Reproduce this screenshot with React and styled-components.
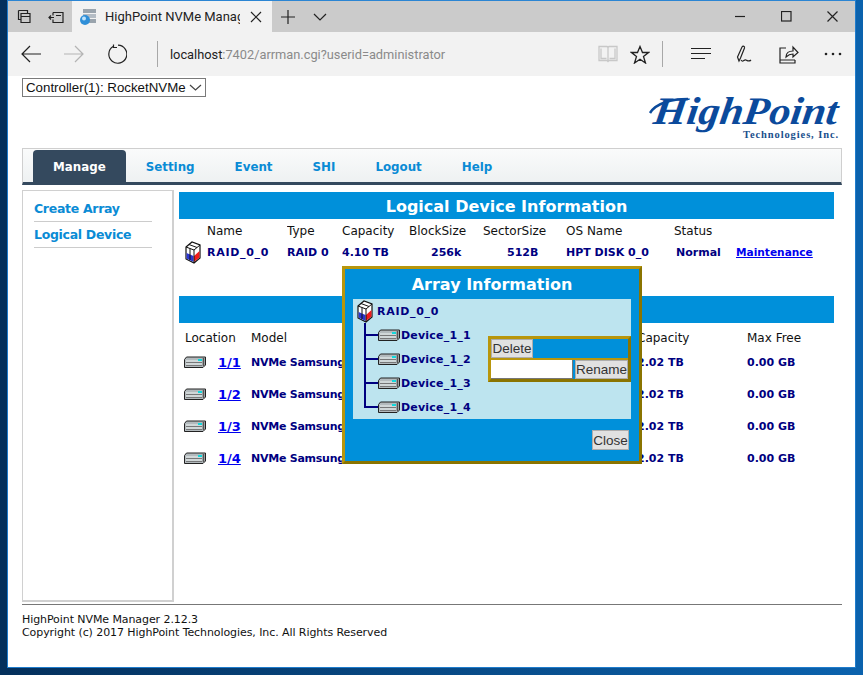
import React from "react";
import styled, { createGlobalStyle } from "styled-components";

const GlobalStyle = createGlobalStyle`
  html, body {
    margin: 0;
    padding: 0;
    height: 675px;
    overflow: hidden;
    background: linear-gradient(90deg, #04305c 0, #04305c 8px, #0b62ad 855px);
  }
  body {
    font-family: "DejaVu Sans", Verdana, sans-serif;
    font-size: 12px;
  }
`;

const BrowserWindow = styled.div`
  box-sizing: border-box;
  width: 849px;
  height: 668px;
  margin-left: 7px;
  border: 1px solid #1f7ccc;
  border-top-color: #2b85d3;
  display: flex;
  flex-direction: column;
  background: #fff;
`;

const TitleBar = styled.div`
  height: 31px;
  background: #cbcbcb;
  display: flex;
  align-items: flex-end;
  flex: none;
`;

const TitleIcon = styled.div`
  width: ${(p) => p.$w}px;
  height: 31px;
  flex: none;
  display: flex;
  align-items: center;
  justify-content: center;
`;

const BrowserTab = styled.div`
  box-sizing: border-box;
  width: 200px;
  height: 31px;
  background: #f2f2f2;
  display: flex;
  align-items: center;
  padding-left: 7px;
  flex: none;
  font-family: Roboto, sans-serif;
  font-size: 13px;
  color: #222;
`;

const TabTitle = styled.span`
  width: 135px;
  flex: none;
  margin: 0 10px 0 8px;
  overflow: hidden;
  white-space: nowrap;
`;

const Spacer = styled.div`
  flex: 1;
`;

const Toolbar = styled.div`
  height: 44px;
  background: #f2f2f2;
  display: flex;
  align-items: center;
  flex: none;
`;

const ToolIcon = styled.div`
  width: ${(p) => p.$w}px;
  height: 44px;
  flex: none;
  display: flex;
  align-items: center;
  justify-content: center;
`;

const Divider = styled.div`
  width: 1px;
  height: 26px;
  background: #a8a8a8;
  flex: none;
`;

const Address = styled.div`
  flex: 1;
  padding-left: 12px;
  font-family: Roboto, sans-serif;
  font-size: 12.8px;
  color: #8a8a8a;
  span {
    color: #222;
  }
`;

const Page = styled.div`
  position: relative;
  flex: 1;
  padding: 0 13px 0 14px;
  display: flex;
  flex-direction: column;
  color: #111;
`;

const TopRow = styled.div`
  height: 72px;
  display: flex;
  justify-content: space-between;
  flex: none;
`;

const ControllerSelect = styled.div`
  box-sizing: border-box;
  width: 184px;
  height: 19px;
  margin-top: 2px;
  border: 1px solid #7a7a7a;
  display: flex;
  align-items: center;
  justify-content: space-between;
  padding: 0 3px;
  white-space: nowrap;
  font-family: "Liberation Sans", Arial, sans-serif;
  font-size: 13.3px;
  color: #111;
`;

const Logo = styled.svg`
  width: 194px;
  height: 50px;
  margin-top: 15px;
`;

const NavBar = styled.div`
  box-sizing: border-box;
  height: 37px;
  flex: none;
  display: flex;
  padding: 1px 0 0 10px;
  border: 1px solid #cfcfcf;
  border-bottom: 3px solid #34495e;
  background: linear-gradient(#fafbfb, #eef1f2);
`;

const NavItem = styled.div`
  padding: 1px 20px 0;
  display: flex;
  align-items: center;
  font-size: 11.85px;
  font-weight: bold;
  color: ${(p) => (p.$active ? "#fff" : "#0a8bd5")};
  background: ${(p) => (p.$active ? "#34495e" : "transparent")};
  border-radius: 4px 4px 0 0;
`;

const Content = styled.div`
  display: flex;
  gap: 5px;
  margin-top: 5px;
  height: 412px;
  flex: none;
`;

const Sidebar = styled.div`
  box-sizing: border-box;
  width: 152px;
  flex: none;
  border: 1px solid #d0d0d0;
  border-width: 1px 2px 2px 1px;
  padding: 5px 20px 0 11px;
`;

const SideLink = styled.div`
  height: 25px;
  border-bottom: 1px solid #ccc;
  display: flex;
  align-items: center;
  font-size: 12.5px;
  font-weight: bold;
  letter-spacing: -0.3px;
  color: #0a8bd5;
`;

const Main = styled.div`
  width: 655px;
  padding-top: 2px;
`;

const SectionTitle = styled.div`
  height: 27px;
  background: #0090da;
  color: #fff;
  font-size: 16px;
  font-weight: bold;
  text-align: center;
  line-height: 29px;
`;

const DeviceTable = styled.table`
  border-collapse: collapse;
  table-layout: fixed;
  width: 655px;
  margin-bottom: ${(p) => p.$after}px;
  th, td {
    box-sizing: border-box;
    padding: 0;
    white-space: nowrap;
    overflow: hidden;
    text-align: left;
  }
  th {
    font-weight: normal;
    color: #111;
    height: ${(p) => p.$headH}px;
    padding-top: ${(p) => p.$headPad}px;
  }
  td {
    font-weight: bold;
    font-size: 11px;
    color: #000080;
    height: ${(p) => p.$rowH}px;
  }
`;

const IconCell = styled.td`
  && {
    padding-left: ${(p) => p.$left}px;
  }
  svg {
    display: block;
  }
`;

const IndentCell = styled.td`
  && {
    padding-left: ${(p) => p.$left}px;
  }
`;

const HeadIndent = styled.th`
  && {
    padding-left: ${(p) => p.$left}px;
  }
`;

const WideText = styled.span`
  letter-spacing: ${(p) => p.$spacing}px;
`;

const DeviceLink = styled.a`
  color: #0000ee;
  text-decoration: underline;
  font-weight: bold;
  font-size: ${(p) => p.$size}px;
`;

const Footer = styled.div`
  margin-top: 2px;
  border-top: 1px solid #777;
  padding-top: 8px;
  font-size: 11px;
  letter-spacing: -0.08px;
  line-height: 13px;
  color: #111;
`;

const Modal = styled.div`
  position: absolute;
  left: 334px;
  top: 190px;
  box-sizing: border-box;
  width: 300px;
  height: 198px;
  background: #0090da;
  border: 3px solid;
  border-color: #b8960c #8a7400 #8a7400 #b8960c;
  padding: 0 8px;
`;

const ModalTitle = styled.div`
  height: 30px;
  line-height: 32px;
  text-align: center;
  color: #fff;
  font-size: 16px;
  font-weight: bold;
`;

const TreePanel = styled.div`
  height: 120px;
  background: #bde4ef;
  display: flex;
  justify-content: space-between;
  align-items: center;
`;

const Tree = styled.div`
  padding-left: 4px;
  color: #000080;
  font-weight: bold;
  font-size: 11px;
`;

const TreeRoot = styled.div`
  height: 24px;
  display: flex;
  align-items: center;
  gap: 4px;
`;

const TreeRow = styled.div`
  height: 24px;
  display: flex;
  align-items: center;
  margin-left: 7px;
  padding-left: 14px;
  gap: 1px;
  position: relative;
  &::before {
    content: "";
    position: absolute;
    left: 0;
    top: 0;
    bottom: ${(p) => (p.$last ? "11px" : "0")};
    width: 2px;
    background: #000080;
  }
  &::after {
    content: "";
    position: absolute;
    left: 0;
    top: 11px;
    width: 14px;
    height: 2px;
    background: #000080;
  }
`;

const ActionBox = styled.div`
  box-sizing: border-box;
  width: 143px;
  height: 46px;
  border: 3px solid;
  border-color: #b8960c #8a7400 #8a7400 #b8960c;
  background: #0090da;
`;

const ActionRow = styled.div`
  display: flex;
  gap: 2px;
  height: ${(p) => p.$h}px;
  ${(p) => p.$line && "border-top: 2px solid #b8960c;"}
`;

const GreyButton = styled.button`
  box-sizing: border-box;
  margin: 0;
  padding: 0;
  height: ${(p) => p.$h}px;
  width: ${(p) => p.$w}px;
  background: #e1e1e1;
  border: 1px solid #adadad;
  font-family: "Liberation Sans", Arial, sans-serif;
  font-size: 13.5px;
  color: #333;
`;

const NameInput = styled.input`
  box-sizing: border-box;
  width: 82px;
  height: 19px;
  margin: 0;
  padding: 0;
  border: 1px solid #777;
  border-width: 0 1px 1px 0;
  background: #fff;
`;

const ModalFooter = styled.div`
  display: flex;
  justify-content: flex-end;
  margin-top: 11px;
  padding-right: 2px;
`;

const Glyph = ({ w = 16, h = 16, children, sw = 1.2, stroke = "#222" }) => (
  <svg width={w} height={h} viewBox={`0 0 ${w} ${h}`} fill="none" stroke={stroke} strokeWidth={sw}>
    {children}
  </svg>
);

const RaidIcon = () => (
  <svg width="16" height="23" viewBox="0 0 16 23" style={{ flex: "none" }}>
    <path d="M1 6 L7 1 L15 4 L15 17 L9 22 L1 18 Z" fill="#fff" stroke="#111" strokeWidth="1.2" />
    <path d="M1.6 12 L8.500 15 L8.500 21 L1.600 17.600 Z" fill="#2a35d0" />
    <path d="M9 15 L14.500 10 L14.500 16.600 L9 21 Z" fill="#ee1c1c" />
    <path d="M1 6 L9 9 L15 4 M9 9 L9 22 M4 3.500 L12 6.500 M5 7.500 L5 19" fill="none" stroke="#111" strokeWidth="1" />
  </svg>
);

const DiskIcon = () => (
  <svg width="22" height="12" viewBox="0 0 22 12" style={{ flex: "none" }}>
    <path d="M2.500 1 L21.500 1 L21.500 9 L19 11.500 L0.500 11.500 L0.500 3.500 Z" fill="#b3babd" stroke="#222" strokeWidth="1" />
    <path d="M2 5 L18 5 M2 8 L18 8" stroke="#eef3f3" strokeWidth="1.200" />
    <path d="M2 6.500 L18 6.500 M2 9.500 L18 9.500" stroke="#666" strokeWidth="0.800" />
    <rect x="14" y="3" width="4" height="2" fill="#12d8dc" />
    <path d="M19.500 2 L19.500 10" stroke="#555" strokeWidth="1.500" />
  </svg>
);

const physicalRows = ["1/1", "1/2", "1/3", "1/4"];
const treeDevices = ["Device_1_1", "Device_1_2", "Device_1_3", "Device_1_4"];

export default function App() {
  return (
    <>
      <GlobalStyle />
      <BrowserWindow>
        <TitleBar>
          <TitleIcon $w={32}>
            <Glyph>
              <path d="M2.500 1.500h9v3M5 4.500h9v9H5zM2.500 1.500v9H5M5 7.500h9" />
            </Glyph>
          </TitleIcon>
          <TitleIcon $w={32}>
            <Glyph>
              <path d="M5 3.500h10v10H5v-3M5 3.500v3M6 8.500H1M3 6.500l-2 2 2 2M8 6.500h5" />
            </Glyph>
          </TitleIcon>
          <BrowserTab>
            <svg width="18" height="18" viewBox="0 0 18 18">
              <rect x="4" y="1" width="13" height="4" fill="#9aa4ad" />
              <rect x="4" y="6" width="13" height="4" fill="#b4bcc4" />
              <rect x="4" y="11" width="13" height="4" fill="#9aa4ad" />
              <circle cx="6" cy="12" r="5" fill="#2f8fd8" />
              <circle cx="5" cy="10.500" r="2" fill="#bfe3fb" />
            </svg>
            <TabTitle>HighPoint NVMe Manager</TabTitle>
            <Glyph w={12} h={12}>
              <path d="M1 1l10 10M11 1L1 11" />
            </Glyph>
          </BrowserTab>
          <TitleIcon $w={32}>
            <Glyph>
              <path d="M8 1v14M1 8h14" />
            </Glyph>
          </TitleIcon>
          <TitleIcon $w={32}>
            <Glyph w={14} h={8}>
              <path d="M1 1l6 6 6-6" />
            </Glyph>
          </TitleIcon>
          <Spacer />
          <TitleIcon $w={46}>
            <Glyph w={11} h={11}>
              <path d="M0 5.500h10" />
            </Glyph>
          </TitleIcon>
          <TitleIcon $w={46}>
            <Glyph w={11} h={11}>
              <rect x="0.500" y="0.500" width="9.500" height="9.500" />
            </Glyph>
          </TitleIcon>
          <TitleIcon $w={46}>
            <Glyph w={11} h={11}>
              <path d="M0.500 0.500l10 10M10.500 0.500l-10 10" />
            </Glyph>
          </TitleIcon>
        </TitleBar>
        <Toolbar>
          <ToolIcon $w={45}>
            <Glyph w={20} h={18}>
              <path d="M20 9H1M9 1L1 9l8 8" />
            </Glyph>
          </ToolIcon>
          <ToolIcon $w={42}>
            <Glyph w={20} h={18} stroke="#b4b4b4">
              <path d="M0 9h19M11 1l8 8-8 8" />
            </Glyph>
          </ToolIcon>
          <ToolIcon $w={44}>
            <Glyph w={20} h={20}>
              <path d="M6 2.600A9 9 0 1 0 11 1.200M6.500 0.500v3h3.500" />
            </Glyph>
          </ToolIcon>
          <ToolIcon $w={18} />
          <Divider />
          <Address>
            <span>localhost</span>:7402/arrman.cgi?userid=administrator
          </Address>
          <ToolIcon $w={20}>
            <Glyph w={20} h={18} stroke="#c8c8c8" sw={1.3}>
              <path d="M1 1.500h8l1 1 1-1h8v14h-8l-1 1-1-1H1zM10 2.500v14M3 3.500v10h5.500M17 3.500v10h-5.500" />
            </Glyph>
          </ToolIcon>
          <ToolIcon $w={44}>
            <Glyph w={20} h={19} sw={1.3}>
              <path d="M10 1.500l2.500 6h6l-5 4 2 6.500-5.500-3.800L4.500 18l2-6.500-5-4h6z" />
            </Glyph>
          </ToolIcon>
          <Divider />
          <ToolIcon $w={15} />
          <ToolIcon $w={46}>
            <Glyph w={20} h={14}>
              <path d="M0 1.500h20M0 6.500h20M0 11.500h14" />
            </Glyph>
          </ToolIcon>
          <ToolIcon $w={42}>
            <Glyph w={19} h={19}>
              <path d="M3 16L1.500 12 6 2c1-1.500 3-.5 2.500 1L4.500 13zM5 15c2 3 3-1 5 0s3 2 5 0" />
            </Glyph>
          </ToolIcon>
          <ToolIcon $w={45}>
            <Glyph w={20} h={19}>
              <path d="M7 3H1v15h15v-3M1 15h15M7 12c0-4 3-6 7-6V2l5 5.500L14 12V9c-3 0-5 1-7 3z" />
            </Glyph>
          </ToolIcon>
          <ToolIcon $w={44}>
            <Glyph w={20} h={4} stroke="none">
              <circle cx="3" cy="2" r="1.300" fill="#222" />
              <circle cx="10" cy="2" r="1.300" fill="#222" />
              <circle cx="17" cy="2" r="1.300" fill="#222" />
            </Glyph>
          </ToolIcon>
        </Toolbar>
        <Page>
          <TopRow>
            <ControllerSelect>
              Controller(1): RocketNVMe
              <Glyph w={13} h={7} stroke="#444">
                <path d="M1 1l5.500 5L12 1" />
              </Glyph>
            </ControllerSelect>
            <Logo viewBox="0 0 194 50">
              <path d="M2 22C8 12 24 8 40 8" fill="none" stroke="#0b4a9c" strokeWidth="2.500" />
              <text
                x="4"
                y="33"
                transform="skewX(-8) translate(5 0)"
                fontFamily="Liberation Serif, serif"
                fontStyle="italic"
                fontWeight="bold"
                fontSize="39"
                fill="#0b4a9c"
                textLength="184"
                lengthAdjust="spacingAndGlyphs"
              >
                HighPoint
              </text>
              <text
                x="191"
                y="47"
                textAnchor="end"
                fontFamily="Liberation Serif, serif"
                fontWeight="bold"
                fontSize="10.500"
                letterSpacing="0.900"
                fill="#1a4f8c"
              >
                Technologies, Inc.
              </text>
            </Logo>
          </TopRow>
          <NavBar>
            <NavItem $active>Manage</NavItem>
            <NavItem>Setting</NavItem>
            <NavItem>Event</NavItem>
            <NavItem>SHI</NavItem>
            <NavItem>Logout</NavItem>
            <NavItem>Help</NavItem>
          </NavBar>
          <Content>
            <Sidebar>
              <SideLink>Create Array</SideLink>
              <SideLink>Logical Device</SideLink>
            </Sidebar>
            <Main>
              <SectionTitle>Logical Device Information</SectionTitle>
              <DeviceTable $headH={22} $headPad={2} $rowH={23} $after={32}>
                <colgroup>
                  <col width="28" />
                  <col width="80" />
                  <col width="55" />
                  <col width="67" />
                  <col width="74" />
                  <col width="83" />
                  <col width="108" />
                  <col width="62" />
                  <col width="98" />
                </colgroup>
                <thead>
                  <tr>
                    <th />
                    <th>Name</th>
                    <th>Type</th>
                    <th>Capacity</th>
                    <th>BlockSize</th>
                    <th>SectorSize</th>
                    <th>OS Name</th>
                    <th>Status</th>
                    <th />
                  </tr>
                </thead>
                <tbody>
                  <tr>
                    <IconCell $left={6}>
                      <RaidIcon />
                    </IconCell>
                    <td>
                      <WideText $spacing={0.7}>RAID_0_0</WideText>
                    </td>
                    <td>RAID 0</td>
                    <td>4.10 TB</td>
                    <IndentCell $left={22}>256k</IndentCell>
                    <IndentCell $left={24}>512B</IndentCell>
                    <td>HPT DISK 0_0</td>
                    <IndentCell $left={2}>Normal</IndentCell>
                    <td>
                      <DeviceLink $size={10.6}>Maintenance</DeviceLink>
                    </td>
                  </tr>
                </tbody>
              </DeviceTable>
              <SectionTitle>Physical Device Information</SectionTitle>
              <DeviceTable $headH={23} $headPad={7} $rowH={32} $after={0}>
                <colgroup>
                  <col width="39" />
                  <col width="33" />
                  <col width="386" />
                  <col width="110" />
                  <col width="87" />
                </colgroup>
                <thead>
                  <tr>
                    <HeadIndent colSpan={2} $left={6}>
                      Location
                    </HeadIndent>
                    <th>Model</th>
                    <th>Capacity</th>
                    <th>Max Free</th>
                  </tr>
                </thead>
                <tbody>
                  {physicalRows.map((loc) => (
                    <tr key={loc}>
                      <IconCell $left={5}>
                        <DiskIcon />
                      </IconCell>
                      <td>
                        <DeviceLink $size={13}>{loc}</DeviceLink>
                      </td>
                      <td>
                        <WideText $spacing={-0.25}>NVMe Samsung SSD 960 EVO</WideText>
                      </td>
                      <td>2.02 TB</td>
                      <td>0.00 GB</td>
                    </tr>
                  ))}
                </tbody>
              </DeviceTable>
            </Main>
          </Content>
          <Footer>
            HighPoint NVMe Manager 2.12.3
            <br />
            Copyright (c) 2017 HighPoint Technologies, Inc. All Rights Reserved
          </Footer>
          <Modal>
            <ModalTitle>Array Information</ModalTitle>
            <TreePanel>
              <Tree>
                <TreeRoot>
                  <RaidIcon />
                  <WideText $spacing={0.7}>RAID_0_0</WideText>
                </TreeRoot>
                {treeDevices.map((name, i) => (
                  <TreeRow key={name} $last={i === treeDevices.length - 1}>
                    <DiskIcon />
                    <WideText $spacing={0.2}>{name}</WideText>
                  </TreeRow>
                ))}
              </Tree>
              <ActionBox>
                <ActionRow $h={19}>
                  <GreyButton $h={19} $w={42}>
                    Delete
                  </GreyButton>
                </ActionRow>
                <ActionRow $h={21} $line>
                  <NameInput />
                  <GreyButton $h={19} $w={53}>
                    Rename
                  </GreyButton>
                </ActionRow>
              </ActionBox>
            </TreePanel>
            <ModalFooter>
              <GreyButton $h={20} $w={37}>
                Close
              </GreyButton>
            </ModalFooter>
          </Modal>
        </Page>
      </BrowserWindow>
    </>
  );
}
